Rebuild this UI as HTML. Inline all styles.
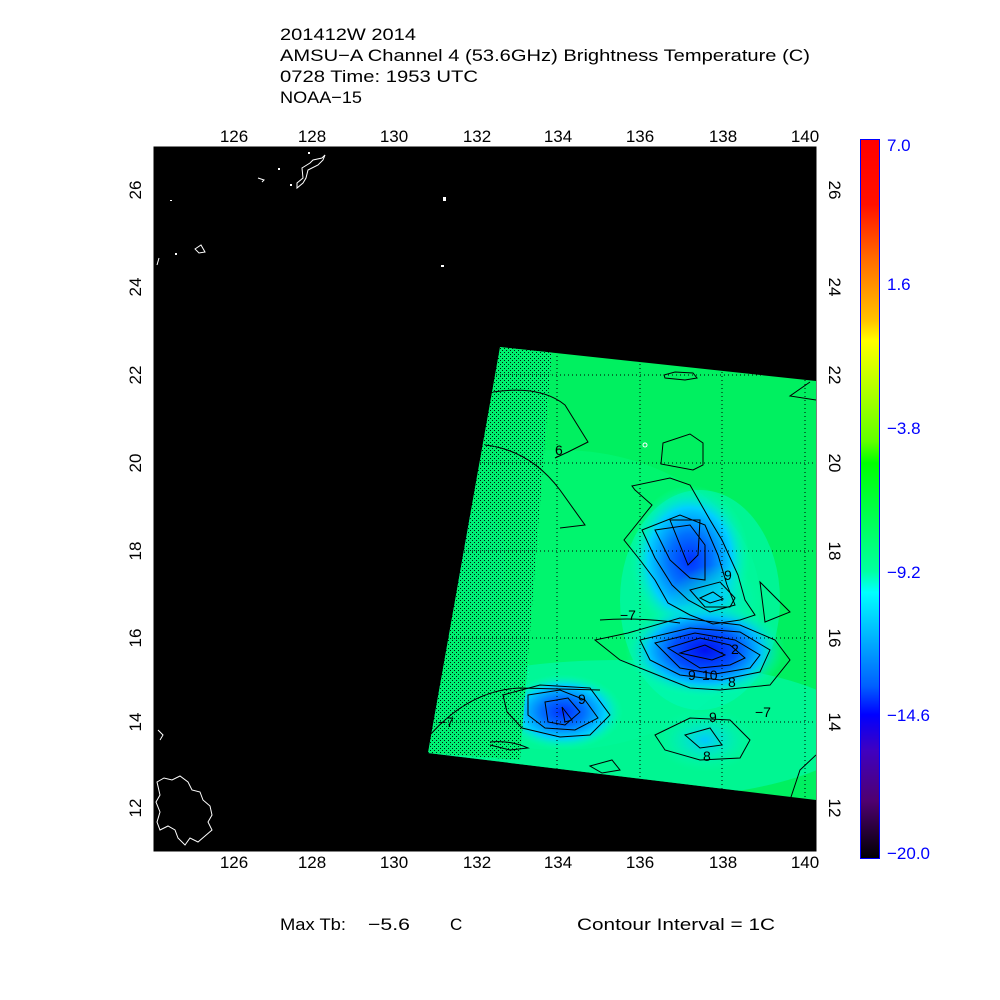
<!DOCTYPE html>
<html><head><style>
html,body{margin:0;padding:0;background:#fff;width:1000px;height:1000px;overflow:hidden}
svg{display:block}
text{font-family:"Liberation Sans",sans-serif}
</style></head><body>
<svg width="1000" height="1000" viewBox="0 0 1000 1000" xmlns="http://www.w3.org/2000/svg">
<defs>
<linearGradient id="cb" x1="0" y1="0" x2="0" y2="1">
<stop offset="0" stop-color="#ff0000"/>
<stop offset="0.09" stop-color="#ff1000"/>
<stop offset="0.17" stop-color="#ff7000"/>
<stop offset="0.25" stop-color="#ffc000"/>
<stop offset="0.28" stop-color="#ffff00"/>
<stop offset="0.42" stop-color="#60ff00"/>
<stop offset="0.45" stop-color="#00ff00"/>
<stop offset="0.60" stop-color="#00ffa0"/>
<stop offset="0.63" stop-color="#00ffff"/>
<stop offset="0.76" stop-color="#0060ff"/>
<stop offset="0.80" stop-color="#0000ff"/>
<stop offset="0.85" stop-color="#4000c0"/>
<stop offset="0.92" stop-color="#500070"/>
<stop offset="1" stop-color="#000000"/>
</linearGradient>
<radialGradient id="b1"><stop offset="0" stop-color="#0030ff"/><stop offset="0.35" stop-color="#0070ff"/><stop offset="0.7" stop-color="#00d0ff"/><stop offset="1" stop-color="#00ffb0" stop-opacity="0"/></radialGradient>
<radialGradient id="b2"><stop offset="0" stop-color="#0010f0"/><stop offset="0.4" stop-color="#0050ff"/><stop offset="0.7" stop-color="#00c0ff"/><stop offset="1" stop-color="#00ffb0" stop-opacity="0"/></radialGradient>
<radialGradient id="b3"><stop offset="0" stop-color="#00c8ff"/><stop offset="1" stop-color="#00ffb0" stop-opacity="0"/></radialGradient>
<pattern id="hatch" width="4" height="4" patternUnits="userSpaceOnUse"><rect width="4" height="4" fill="#00f070"/><rect x="0" y="0" width="1" height="1" fill="#000"/><rect x="2" y="2" width="1" height="1" fill="#000"/></pattern>
<clipPath id="sw"><polygon points="500,347 816,381 816,800 428,753"/></clipPath>
</defs>

<text x="280" y="40" font-size="17" textLength="136" lengthAdjust="spacingAndGlyphs">201412W 2014</text>
<text x="280" y="61" font-size="17" textLength="530" lengthAdjust="spacingAndGlyphs">AMSU−A Channel 4 (53.6GHz) Brightness Temperature (C)</text>
<text x="280" y="82" font-size="17" textLength="198" lengthAdjust="spacingAndGlyphs">0728 Time: 1953 UTC</text>
<text x="280" y="103" font-size="17" textLength="82" lengthAdjust="spacingAndGlyphs">NOAA−15</text>

<rect x="153" y="146" width="664" height="706" fill="#000"/>
<rect x="153" y="146" width="664" height="706" fill="none" stroke="#fff" stroke-width="1"/>

<g clip-path="url(#sw)">
<rect x="420" y="340" width="400" height="470" fill="#00f060"/>
<ellipse cx="560" cy="600" rx="200" ry="150" fill="#00f878" opacity="0.6"/>
<ellipse cx="620" cy="730" rx="240" ry="70" fill="#00f8a8" opacity="0.7"/>
<ellipse cx="700" cy="600" rx="80" ry="110" fill="#00f8b8" opacity="0.6"/>
<ellipse cx="690" cy="560" rx="60" ry="75" fill="url(#b1)"/>
<ellipse cx="715" cy="600" rx="45" ry="35" fill="url(#b3)"/>
<ellipse cx="705" cy="650" rx="80" ry="48" fill="url(#b2)"/>
<ellipse cx="563" cy="712" rx="60" ry="38" fill="url(#b1)"/>
<ellipse cx="705" cy="740" rx="50" ry="32" fill="url(#b3)"/>
<ellipse cx="480" cy="560" rx="25" ry="50" fill="#00f0d0" opacity="0.7"/>
<polygon points="500,347 552,352 520,760 428,753" fill="url(#hatch)" opacity="0.9"/>
<g stroke="#000" stroke-width="1" stroke-dasharray="1,3" fill="none">
<line x1="420" y1="375" x2="820" y2="375"/><line x1="420" y1="463" x2="820" y2="463"/>
<line x1="420" y1="551" x2="820" y2="551"/><line x1="420" y1="638" x2="820" y2="638"/>
<line x1="420" y1="722" x2="820" y2="722"/>
<line x1="557" y1="340" x2="557" y2="810"/><line x1="640" y1="340" x2="640" y2="810"/><line x1="722" y1="340" x2="722" y2="810"/><line x1="805" y1="340" x2="805" y2="810"/>
</g>
<g stroke="#000" stroke-width="1" fill="none">
<polygon points="664,375 675,372 693,373 697,378 685,380 665,378"/>
<polygon points="663,443 690,434 703,443 703,465 693,470 661,464"/>
<path d="M493,392 Q540,385 565,405 L588,442 L568,452 L555,458"/>
<path d="M485,445 Q530,450 560,490 L585,525 L560,528"/>
<polygon points="632,486 670,478 690,485 710,520 722,540 738,575 745,600 755,615 740,620 713,624 690,615 668,603 655,580 640,560 624,540 652,505 635,490"/>
<polygon points="642,530 680,515 705,525 718,555 727,585 735,605 710,612 688,600 672,585 655,558"/>
<polygon points="655,530 690,525 705,545 705,580 690,578 670,560"/>
<polygon points="670,520 700,520 698,555 688,565"/>
<polygon points="690,590 720,582 735,598 730,607 705,607"/>
<polygon points="700,598 713,592 723,599 710,603"/>
<path d="M600,620 Q640,617 680,623"/>
<polygon points="628,633 680,618 740,625 775,640 790,660 770,685 720,690 690,688 650,672 620,660 595,640"/>
<polygon points="640,640 690,628 740,632 770,650 760,672 720,680 680,675 650,660"/>
<polygon points="655,643 695,633 735,640 760,655 750,668 715,674 680,668"/>
<polygon points="668,648 700,638 730,645 745,658 730,665 700,668"/>
<polygon points="680,653 705,645 725,655 712,660"/>
<polygon points="760,582 790,612 765,622"/>
<polygon points="503,695 540,685 590,688 610,715 590,735 560,737 522,728 507,712"/>
<polygon points="528,695 560,690 585,700 598,718 575,730 545,728 528,715"/>
<polygon points="545,702 568,698 580,712 565,725 548,722"/>
<polygon points="562,707 572,720 565,722"/>
<polygon points="655,735 690,718 730,720 750,740 740,758 700,760 665,750"/>
<polygon points="685,735 710,728 722,745 700,748"/>
<path d="M430,735 Q470,690 520,688 L600,690"/>
<path d="M490,742 Q510,740 528,748 L510,750 L490,745"/>
<polygon points="590,766 612,760 620,770 602,773"/>
<path d="M790,800 L800,770 L816,755"/>
<path d="M810,382 L790,396 L816,400"/>
</g>
<g font-size="14" fill="#000">
<text x="555" y="455">6</text><text x="620" y="620">−7</text><text x="724" y="580">9</text>
<text x="731" y="654">2</text><text x="688" y="680">9</text><text x="702" y="680">10</text>
<text x="728" y="687">8</text><text x="578" y="704">9</text><text x="709" y="722">9</text>
<text x="703" y="761">8</text><text x="755" y="717">−7</text><text x="438" y="727">−7</text>
</g>
<circle cx="645" cy="445" r="2" fill="none" stroke="#fff"/>
</g>

<!-- coastlines -->
<g stroke="#fff" fill="none" stroke-width="1">
<path d="M297,183 L303,178 L302,168 L310,163 L313,160 L322,158 L325,155 L323,160 L318,165 L308,170 L306,178 L303,183 L297,188 Z"/>
<path d="M258,178 L264,180 L262,182"/>
<path d="M195,249 L201,245 L205,252 L199,253 Z"/>
<path d="M157,265 L159,258"/>
<path d="M157,782 L164,778 L172,780 L180,776 L188,782 L192,790 L200,792 L203,800 L210,806 L212,815 L208,822 L212,830 L205,836 L198,842 L190,838 L185,845 L178,838 L175,830 L168,826 L160,830 L157,822 L160,812 L156,802 L160,795 Z"/>
<path d="M158,730 L163,735 L160,740"/>
</g>
<g fill="#fff">
<rect x="278" y="168" width="2" height="2"/><rect x="290" y="184" width="2" height="2"/><rect x="170" y="200" width="2" height="1"/>
<rect x="175" y="253" width="2" height="2"/><rect x="441" y="265" width="3" height="2"/><rect x="443" y="197" width="3" height="4"/>
<rect x="308" y="152" width="2" height="2"/>
</g>

<!-- axes labels -->
<g font-size="17" fill="#000" text-anchor="middle">
<text x="234" y="142">126</text><text x="312" y="142">128</text><text x="394" y="142">130</text><text x="477" y="142">132</text><text x="558" y="142">134</text><text x="640" y="142">136</text><text x="723" y="142">138</text><text x="805" y="142">140</text>
<text x="234" y="868">126</text><text x="312" y="868">128</text><text x="394" y="868">130</text><text x="477" y="868">132</text><text x="558" y="868">134</text><text x="640" y="868">136</text><text x="723" y="868">138</text><text x="805" y="868">140</text>
</g>
<g font-size="17" fill="#000" text-anchor="middle">
<text transform="translate(141,190) rotate(-90)">26</text><text transform="translate(141,287) rotate(-90)">24</text><text transform="translate(141,375) rotate(-90)">22</text><text transform="translate(141,463) rotate(-90)">20</text><text transform="translate(141,551) rotate(-90)">18</text><text transform="translate(141,638) rotate(-90)">16</text><text transform="translate(141,722) rotate(-90)">14</text><text transform="translate(141,808) rotate(-90)">12</text>
<text transform="translate(829,190) rotate(90)">26</text><text transform="translate(829,287) rotate(90)">24</text><text transform="translate(829,375) rotate(90)">22</text><text transform="translate(829,463) rotate(90)">20</text><text transform="translate(829,551) rotate(90)">18</text><text transform="translate(829,638) rotate(90)">16</text><text transform="translate(829,722) rotate(90)">14</text><text transform="translate(829,808) rotate(90)">12</text>
</g>

<!-- colorbar -->
<rect x="860.5" y="139.5" width="19" height="719" fill="url(#cb)" stroke="#0000ff" stroke-width="1"/>
<g font-size="17" fill="#0000ff">
<text x="887" y="151">7.0</text><text x="887" y="290">1.6</text><text x="887" y="434">−3.8</text><text x="887" y="578">−9.2</text><text x="887" y="721">−14.6</text><text x="887" y="859">−20.0</text>
</g>

<text x="280" y="930" font-size="17" textLength="66" lengthAdjust="spacingAndGlyphs">Max Tb:</text>
<text x="368" y="930" font-size="17" textLength="42" lengthAdjust="spacingAndGlyphs">−5.6</text>
<text x="450" y="930" font-size="17">C</text>
<text x="577" y="930" font-size="17" textLength="198" lengthAdjust="spacingAndGlyphs">Contour Interval = 1C</text>
</svg>
</body></html>
